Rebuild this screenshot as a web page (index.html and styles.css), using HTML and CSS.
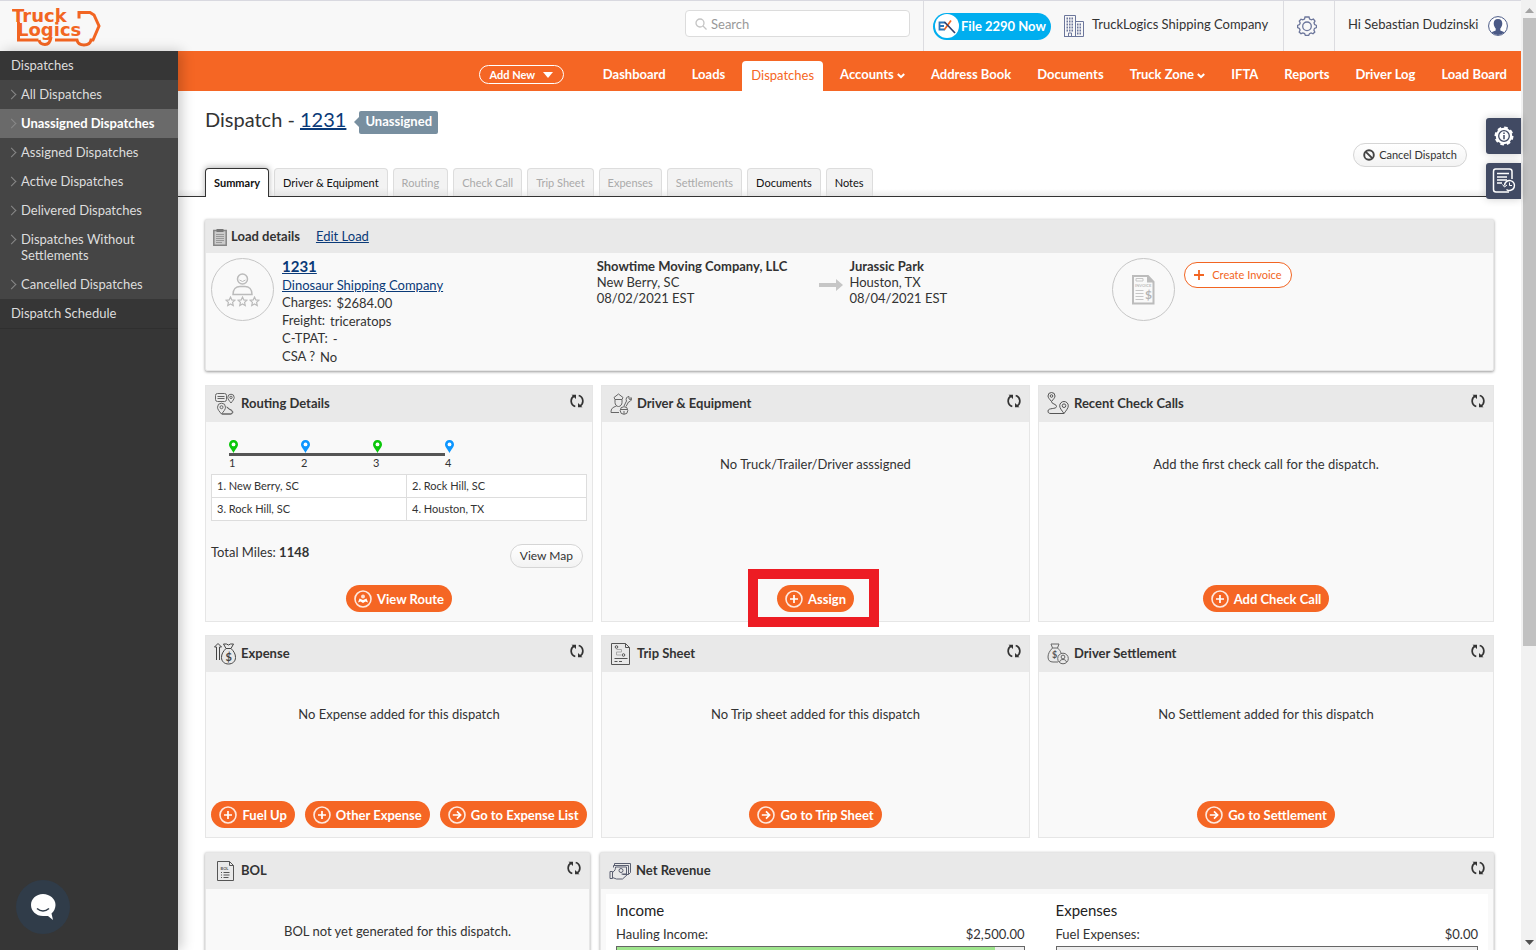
FILE: index.html
```html
<!DOCTYPE html>
<html lang="en">
<head>
    <meta charset="UTF-8">
    <meta name="viewport" content="width=device-width, initial-scale=1.0">
    <title>TruckLogics - Dispatch 1231</title>
    <link rel="stylesheet" href="styles.css">
</head>
<body>
<!-- shared icons -->
<svg width="0" height="0" class="sprite">
    <symbol id="refresh" viewBox="0 0 14 14">
        <path d="M4.200 2A5.700 5.700 0 0 0 5.300 12.500M9.800 12A5.700 5.700 0 0 0 8.700 1.500" fill="none" stroke="#333" stroke-width="1.700"/>
        <path d="M1.500.8H6V5zM12.500 13.200H8V9z" fill="#333"/>
    </symbol>
    <symbol id="plus" viewBox="0 0 18 18">
        <circle cx="9" cy="9" r="8" fill="none" stroke="#fff" stroke-opacity=".85" stroke-width="1.600"/>
        <path d="M9 5v8M5 9h8" stroke="#fff" stroke-width="1.700"/>
    </symbol>
    <symbol id="arrow" viewBox="0 0 18 18">
        <circle cx="9" cy="9" r="8" fill="none" stroke="#fff" stroke-opacity=".85" stroke-width="1.600"/>
        <path d="M4.800 9h7.400M9 5.400L12.600 9 9 12.600" fill="none" stroke="#fff" stroke-width="1.700"/>
    </symbol>
    <symbol id="pin" viewBox="0 0 9 13">
        <path d="M4.500 0A4.400 4.400 0 0 0 0 4.400C0 7.200 3 9.500 4.500 13 6 9.500 9 7.200 9 4.400A4.400 4.400 0 0 0 4.500 0z" fill="currentColor"/>
        <circle cx="4.500" cy="4.400" r="1.900" fill="#fff"/>
    </symbol>
    <symbol id="star" viewBox="0 0 10 10">
        <path d="M5 1l1.200 2.600 2.800.3-2.100 1.900.6 2.800L5 7.200 2.500 8.600l.6-2.800L1 3.900l2.800-.3z" fill="none" stroke="#bbb" stroke-width="1.100"/>
    </symbol>
</svg>

<div class="page">
    <header class="topbar">
        <a href="#" class="logo" aria-label="TruckLogics">
            <svg width="90" height="42" viewBox="0 0 90 42">
                <g fill="#f26522" font-family="DejaVu Sans, sans-serif" font-weight="bold" font-size="18">
                    <text x="0" y="17">Truck</text>
                    <text x="5" y="31">Logics</text>
                </g>
                <g fill="none" stroke="#f26522" stroke-width="3">
                    <path d="M6.500 17v18h20"/>
                    <path d="M27 35q1 4.500 6 4.500t6-7.500"/>
                    <path d="M43 35h22q1 5 7 5t7-5h2l6-14-5-11-4-2.500H67v6"/>
                </g>
            </svg>
        </a>
        <form class="search">
            <svg width="12" height="12" viewBox="0 0 12 12" fill="none" stroke="#c4c4c4" stroke-width="1.300"><circle cx="5" cy="5" r="4"/><path d="M8 8l3.500 3.500"/></svg>
            <input type="text" id="search" placeholder="Search" aria-label="Search">
        </form>
        <div class="top-cell company">
            <a href="#" class="file-btn">
                <svg width="24" height="24" viewBox="0 0 24 24">
                    <circle cx="12" cy="12" r="12" fill="#fff"/>
                    <path d="M10 8.500H4.500v7H10M4.500 12H9" fill="none" stroke="#2b76b9" stroke-width="1.800"/>
                    <path d="M16 6.500L9.500 15.500" stroke="#f26522" stroke-width="1.700"/>
                    <path d="M9.500 8L20 19" stroke="#2e4070" stroke-width="1.700"/>
                </svg>
                File 2290 Now
            </a>
            <svg width="20" height="22" viewBox="0 0 20 22" fill="none" stroke="#6c769b">
                <path d="M.5 21.500V.5h11v21M11.500 6.500h8v15H0"/>
                <path d="M2.500 3.500h7.500M2.500 6.500h7.500M2.500 9.500h7.500M2.500 12.500h7.500M2.500 15.500h7.500M13 9.500h5M13 12.500h5M13 15.500h5M13 18.500h5" stroke-width="2" stroke-dasharray="1.500 1"/>
                <path d="M4.500 21v-3h3v3"/>
            </svg>
            <span>TruckLogics Shipping Company</span>
        </div>
        <a href="#" class="top-cell settings" aria-label="Settings">
            <svg width="20" height="20" viewBox="0 0 20 20" fill="none" stroke="#6c769b" stroke-width="1.300">
                <path d="M8 1h4l.6 2 1.900.8L16.400 3 18 5l-1 1.900.6 1.600 1.900 1v2l-2 .9-.6 1.700.9 1.900-1.800 1.800-1.900-.8-1.600.7-.9 1.800H8.400l-.8-1.900-1.700-.7-1.900.8L2.200 16l.9-1.900-.7-1.700-1.800-.9v-2l1.900-.9.7-1.700L2.300 5 4 3.200l1.800.7L7.500 3z"/>
                <circle cx="10" cy="10.300" r="4.300"/>
            </svg>
        </a>
        <a href="#" class="top-cell user">
            <span>Hi Sebastian Dudzinski</span>
            <svg width="20" height="20" viewBox="0 0 20 20">
                <circle cx="10" cy="10" r="9.400" fill="#fff" stroke="#4b5a86"/>
                <path d="M10 3c3 0 4.300 2 4.300 4.500S13 11.500 12.300 12.500v2l4.200 1.800A9.400 9.400 0 0 1 3.500 16.300l4.200-1.800v-2C7 11.500 5.700 10 5.700 7.500S7 3 10 3z" fill="#4b5a86"/>
            </svg>
        </a>
    </header>

    <div class="below">
        <aside class="sidebar">
            <a href="#" class="side-title">Dispatches</a>
            <ul>
                <li><a href="#">All Dispatches</a></li>
                <li class="active"><a href="#">Unassigned Dispatches</a></li>
                <li><a href="#">Assigned Dispatches</a></li>
                <li><a href="#">Active Dispatches</a></li>
                <li><a href="#">Delivered Dispatches</a></li>
                <li><a href="#">Dispatches Without Settlements</a></li>
                <li><a href="#">Cancelled Dispatches</a></li>
            </ul>
            <a href="#" class="side-title last">Dispatch Schedule</a>
        </aside>

        <div class="main">
            <nav class="nav">
                <button type="button" class="add-new">Add New
                    <svg width="10" height="6" viewBox="0 0 10 6"><path d="M0 0h10L5 6z" fill="#fff"/></svg>
                </button>
                <a href="#">Dashboard</a>
                <a href="#">Loads</a>
                <a href="#" class="current">Dispatches</a>
                <a href="#">Accounts <svg width="8" height="6" viewBox="0 0 8 6"><path d="M.8 1L4 4.200 7.200 1" fill="none" stroke="#fff" stroke-width="2"/></svg></a>
                <a href="#">Address Book</a>
                <a href="#">Documents</a>
                <a href="#">Truck Zone <svg width="8" height="6" viewBox="0 0 8 6"><path d="M.8 1L4 4.200 7.200 1" fill="none" stroke="#fff" stroke-width="2"/></svg></a>
                <a href="#">IFTA</a>
                <a href="#">Reports</a>
                <a href="#">Driver Log</a>
                <a href="#">Load Board</a>
            </nav>

            <div class="title-row">
                <h1>Dispatch - <a href="#">1231</a></h1>
                <span class="badge">Unassigned</span>
                <button type="button" class="plain-btn cancel">
                    <svg width="12" height="12" viewBox="0 0 12 12" fill="none" stroke="#444" stroke-width="1.900"><circle cx="6" cy="6" r="4.800"/><path d="M2.600 2.600l6.800 6.800"/></svg>
                    Cancel Dispatch
                </button>
            </div>

            <div class="tabs">
                <a href="#" class="tab selected">Summary</a>
                <a href="#" class="tab">Driver &amp; Equipment</a>
                <a href="#" class="tab off">Routing</a>
                <a href="#" class="tab off">Check Call</a>
                <a href="#" class="tab off">Trip Sheet</a>
                <a href="#" class="tab off">Expenses</a>
                <a href="#" class="tab off">Settlements</a>
                <a href="#" class="tab">Documents</a>
                <a href="#" class="tab">Notes</a>
            </div>

            <main class="content">
                <section class="card raised load">
                    <div class="load-head">
                        <svg width="14" height="18" viewBox="0 0 14 18">
                            <path d="M.8 2.500h12.400v14.700H.8z" fill="#ccc" stroke="#858585" stroke-width="1.500"/>
                            <path d="M3.500 1h7v3h-7z" fill="#777"/>
                            <path d="M3 6.500h8M3 8.500h8M3 10.500h8M3 12.500h8M3 14.500h6" stroke="#999"/>
                        </svg>
                        <h2>Load details</h2>
                        <a href="#">Edit Load</a>
                    </div>
                    <div class="load-body">
                        <div class="customer">
                            <svg width="63" height="63" viewBox="0 0 63 63" fill="none" stroke="#bbb">
                                <circle cx="31.500" cy="31.500" r="31" stroke="#c6c6c6"/>
                                <g stroke-width="1.500">
                                    <circle cx="31.500" cy="21" r="5"/>
                                    <path d="M28.500 22q3 3 6 0" stroke-width="1"/>
                                    <path d="M22 36.500c0-5 3-8 7-8h5c4 0 7 3 7 8z"/>
                                </g>
                                <use href="#star" x="14" y="38" width="11" height="11"/>
                                <use href="#star" x="26" y="38" width="11" height="11"/>
                                <use href="#star" x="38" y="38" width="11" height="11"/>
                            </svg>
                            <div>
                                <a href="#" class="load-no">1231</a>
                                <a href="#" class="load-company">Dinosaur Shipping Company</a>
                                <dl>
                                    <div><dt>Charges:</dt><dd>$2684.00</dd></div>
                                    <div><dt>Freight:</dt><dd>triceratops</dd></div>
                                    <div><dt>C-TPAT:</dt><dd>-</dd></div>
                                    <div><dt>CSA ?</dt><dd>No</dd></div>
                                </dl>
                            </div>
                        </div>
                        <div class="stop">
                            <strong>Showtime Moving Company, LLC</strong>
                            <span>New Berry, SC</span>
                            <span>08/02/2021 EST</span>
                        </div>
                        <svg class="to" width="24" height="12" viewBox="0 0 24 12"><path d="M0 4h17V0l7 6-7 6V8H0z" fill="#c6c6c6"/></svg>
                        <div class="stop">
                            <strong>Jurassic Park</strong>
                            <span>Houston, TX</span>
                            <span>08/04/2021 EST</span>
                        </div>
                        <div class="invoice">
                            <svg width="63" height="63" viewBox="0 0 63 63" fill="none">
                                <circle cx="31.500" cy="31.500" r="31" stroke="#c6c6c6"/>
                                <path d="M21 18h15l5.500 6v21.500H21z" fill="#f9f9f9" stroke="#bcbcbc" stroke-width="2"/>
                                <path d="M35 17v7.500h7z" fill="#bcbcbc"/>
                                <path d="M24 20.500h7v2.500h-7z" stroke="#c6c6c6"/>
                                <path d="M23.500 32.500h8M23.500 35.500h8M23.500 38.500h8M23.500 41.500h8" stroke="#c6c6c6"/>
                                <text x="23" y="29" font-size="4" font-weight="bold" fill="#bcbcbc">INVOICE</text>
                                <text x="33" y="41" font-size="12" font-weight="bold" fill="#b4b4b4">$</text>
                            </svg>
                            <button type="button" class="outline-btn">
                                <svg width="10" height="10" viewBox="0 0 10 10"><path d="M5 0v10M0 5h10" stroke="#f26522" stroke-width="1.800"/></svg>
                                Create Invoice
                            </button>
                        </div>
                    </div>
                </section>

                <div class="grid-three">
                    <section class="card">
                        <div class="card-head">
                            <svg width="22" height="24" viewBox="0 0 22 24" fill="none" stroke="#666">
                                <rect x="1.500" y="1.500" width="11" height="8" rx="2"/><path d="M3.500 4.500h7M3.500 6.500h7"/>
                                <path d="M17 11c-1.800-2.300-3.200-3.800-3.200-5.600a3.200 3.200 0 0 1 6.400 0c0 1.800-1.400 3.300-3.200 5.600z"/><circle cx="17" cy="5.400" r="1.200"/>
                                <path d="M7.500 22c-2.300-2.800-4-4.600-4-6.800a4 4 0 0 1 8 0c0 2.200-1.700 4-4 6.800zh9c3-.5 2-4-1-4.500l-3-2.500"/><circle cx="7.500" cy="15.200" r="1.500"/>
                                <path d="M8 22h9c3-.5 2-4-1-4.500l-3-2.500"/>
                            </svg>
                            <h2>Routing Details</h2>
                            <button type="button" class="refresh" aria-label="Refresh"><svg width="14" height="14"><use href="#refresh"/></svg></button>
                        </div>
                        <div class="card-body routing">
                            <ol class="route">
                                <li class="pickup"><svg width="9" height="13"><use href="#pin"/></svg><span>1</span></li>
                                <li class="drop"><svg width="9" height="13"><use href="#pin"/></svg><span>2</span></li>
                                <li class="pickup"><svg width="9" height="13"><use href="#pin"/></svg><span>3</span></li>
                                <li class="drop"><svg width="9" height="13"><use href="#pin"/></svg><span>4</span></li>
                            </ol>
                            <table class="stops">
                                <tr><td>1. New Berry, SC</td><td>2. Rock Hill, SC</td></tr>
                                <tr><td>3. Rock Hill, SC</td><td>4. Houston, TX</td></tr>
                            </table>
                            <div class="miles">
                                <span>Total Miles: <b>1148</b></span>
                                <button type="button" class="plain-btn">View Map</button>
                            </div>
                            <div class="actions">
                                <button type="button" class="btn">
                                    <svg width="18" height="18" viewBox="0 0 18 18"><circle cx="9" cy="9" r="8" fill="none" stroke="#fff" stroke-opacity=".85" stroke-width="1.600"/><path d="M4 12.500l1.500-4L9 10l3.500-1.500 1.500 4-2.500-1L9 13l-2.500-1.500z" fill="#fff"/><circle cx="9" cy="6.500" r="2" fill="#fff" fill-opacity=".8"/></svg>
                                    View Route
                                </button>
                            </div>
                        </div>
                    </section>

                    <section class="card">
                        <div class="card-head">
                            <svg width="22" height="24" viewBox="0 0 22 24" fill="none" stroke="#666">
                                <path d="M4 5.500l4.500-3.500L13 5.500l-1 2H5zM5 7.500v3c0 2 1.500 4 3.500 4s3.500-2 3.500-4v-3M1 20.500c0-4 1.500-5 5.500-6.500M1 20.500h8"/>
                                <path d="M14 14l2.500-5c-1-2 0-4.500 2.500-4.500v2.500l2 1V5.500c1 2 0 4-2.500 4.500L16 14.500"/>
                                <circle cx="14" cy="18.500" r="3.800"/><path d="M10.500 17.500h7M14 19v3"/>
                            </svg>
                            <h2>Driver &amp; Equipment</h2>
                            <button type="button" class="refresh" aria-label="Refresh"><svg width="14" height="14"><use href="#refresh"/></svg></button>
                        </div>
                        <div class="card-body">
                            <p>No Truck/Trailer/Driver asssigned</p>
                            <div class="actions">
                                <span class="marked"><button type="button" class="btn"><svg width="18" height="18"><use href="#plus"/></svg>Assign</button></span>
                            </div>
                        </div>
                    </section>

                    <section class="card">
                        <div class="card-head">
                            <svg width="22" height="24" viewBox="0 0 22 24" fill="none" stroke="#555">
                                <path d="M4.500 9.500C2.500 7 1 5.700 1 4a3.500 3.500 0 0 1 7 0c0 1.700-1.500 3-3.500 5.500z"/><circle cx="4.500" cy="4" r="1.300"/>
                                <path d="M17 21.500c-2.500-3.500-4.300-5.400-4.300-7.700a4.300 4.300 0 0 1 8.600 0c0 2.300-1.800 4.200-4.300 7.700z"/><circle cx="17" cy="13.700" r="1.800"/>
                                <path d="M4.500 9.500c0 3 5 2 5 5s-8.500 1-8.500 4.500c0 2 1 2.500 3 2.500h13"/>
                            </svg>
                            <h2>Recent Check Calls</h2>
                            <button type="button" class="refresh" aria-label="Refresh"><svg width="14" height="14"><use href="#refresh"/></svg></button>
                        </div>
                        <div class="card-body">
                            <p>Add the first check call for the dispatch.</p>
                            <div class="actions">
                                <button type="button" class="btn"><svg width="18" height="18"><use href="#plus"/></svg>Add Check Call</button>
                            </div>
                        </div>
                    </section>

                    <section class="card short">
                        <div class="card-head">
                            <svg width="22" height="24" viewBox="0 0 22 24" fill="none" stroke="#444">
                                <path d="M2.500 18V5H.5L4 1.500 7.500 5h-2v13"/>
                                <path d="M12 6.500L9.500 2h3l2 1 2-1h3L17 6.500zM12 6.500C9 9.500 7.500 12 7.500 15.500c0 4 3 6.500 7 6.500s7-2.500 7-6.500c0-3.500-1.500-6-4.500-9"/>
                                <text x="11.500" y="19" font-size="11" font-weight="bold" fill="#444" stroke="none">$</text>
                            </svg>
                            <h2>Expense</h2>
                            <button type="button" class="refresh" aria-label="Refresh"><svg width="14" height="14"><use href="#refresh"/></svg></button>
                        </div>
                        <div class="card-body">
                            <p>No Expense added for this dispatch</p>
                            <div class="actions">
                                <button type="button" class="btn"><svg width="18" height="18"><use href="#plus"/></svg>Fuel Up</button>
                                <button type="button" class="btn"><svg width="18" height="18"><use href="#plus"/></svg>Other Expense</button>
                                <button type="button" class="btn"><svg width="18" height="18"><use href="#arrow"/></svg>Go to Expense List</button>
                            </div>
                        </div>
                    </section>

                    <section class="card short">
                        <div class="card-head">
                            <svg width="22" height="24" viewBox="0 0 22 24" fill="none" stroke="#555">
                                <path d="M1.500 1.500h14l4 4v17h-18zM15.500 1.500v4h4"/>
                                <circle cx="6.500" cy="5" r="1.300"/><circle cx="13.500" cy="13" r="1.300"/>
                                <path d="M6.500 7.500h5v2.500h-5v3h4.500" stroke="#aaa"/>
                                <path d="M4.500 16.500h13M4.500 19.500h3M9 19.500h3"/>
                            </svg>
                            <h2>Trip Sheet</h2>
                            <button type="button" class="refresh" aria-label="Refresh"><svg width="14" height="14"><use href="#refresh"/></svg></button>
                        </div>
                        <div class="card-body">
                            <p>No Trip sheet added for this dispatch</p>
                            <div class="actions">
                                <button type="button" class="btn"><svg width="18" height="18"><use href="#arrow"/></svg>Go to Trip Sheet</button>
                            </div>
                        </div>
                    </section>

                    <section class="card short">
                        <div class="card-head">
                            <svg width="22" height="24" viewBox="0 0 22 24" fill="none" stroke="#666">
                                <path d="M5.500 6L4 2h8l-1.500 4zM5.500 6C2.500 9 1 12 1 15c0 3.500 2 5 5 5h5M10.500 6c2 2 3 3 3.500 5"/>
                                <circle cx="16" cy="16.500" r="5.300"/><circle cx="16" cy="15" r="1.900"/><path d="M12.500 20c.5-2 2-2.500 3.500-2.500s3 .5 3.500 2.500"/>
                                <text x="5" y="16" font-size="9" font-weight="bold" fill="#555" stroke="none">$</text>
                            </svg>
                            <h2>Driver Settlement</h2>
                            <button type="button" class="refresh" aria-label="Refresh"><svg width="14" height="14"><use href="#refresh"/></svg></button>
                        </div>
                        <div class="card-body">
                            <p>No Settlement added for this dispatch</p>
                            <div class="actions">
                                <button type="button" class="btn"><svg width="18" height="18"><use href="#arrow"/></svg>Go to Settlement</button>
                            </div>
                        </div>
                    </section>
                </div>

                <div class="grid-two">
                    <section class="card raised">
                        <div class="card-head">
                            <svg width="22" height="24" viewBox="0 0 22 24" fill="none" stroke="#555">
                                <path d="M3.500 2.500h12l4 4v15h-16zM15.500 2.500v4h4"/>
                                <path d="M7 13.500h1M7 16h1M7 18.500h1M9.500 13.500h6M9.500 16h6M9.500 18.500h5"/>
                                <text x="6.500" y="10.500" font-size="4" font-weight="bold" fill="#555" stroke="none">BOL</text>
                            </svg>
                            <h2>BOL</h2>
                            <button type="button" class="refresh" aria-label="Refresh"><svg width="14" height="14"><use href="#refresh"/></svg></button>
                        </div>
                        <div class="card-body">
                            <p>BOL not yet generated for this dispatch.</p>
                        </div>
                    </section>

                    <section class="card raised">
                        <div class="card-head">
                            <svg width="22" height="24" viewBox="0 0 22 24" fill="none" stroke="#5a5f70">
                                <path d="M5.500 6.500v-2h16v9l-2 2M4.500 8.500v-2h15v9h-6"/>
                                <path d="M1 12.500h2.500v7H1zM3.500 13.500c3-2 3-4 3-5.500h11v7h-5M3.500 18.500l4 1.500h6l5-4.500"/><circle cx="12" cy="11.500" r="2"/>
                            </svg>
                            <h2>Net Revenue</h2>
                            <button type="button" class="refresh" aria-label="Refresh"><svg width="14" height="14"><use href="#refresh"/></svg></button>
                        </div>
                        <div class="revenue">
                            <div>
                                <h3>Income</h3>
                                <div class="amount"><span>Hauling Income:</span><span>$2,500.00</span></div>
                                <div class="bar"><div class="fill" style="width: 93%"></div></div>
                            </div>
                            <div>
                                <h3>Expenses</h3>
                                <div class="amount"><span>Fuel Expenses:</span><span>$0.00</span></div>
                                <div class="bar"></div>
                            </div>
                        </div>
                    </section>
                </div>
            </main>
        </div>
    </div>
</div>

<div class="scrollbar">
    <svg width="9" height="5" viewBox="0 0 9 5"><path d="M4.500 0L9 5H0z" fill="#a3a3a3"/></svg>
    <div class="thumb"></div>
    <svg width="9" height="5" viewBox="0 0 9 5"><path d="M0 0h9L4.500 5z" fill="#505050"/></svg>
</div>

<div class="side-tools">
    <button type="button" aria-label="Info">
        <svg width="20" height="20" viewBox="0 0 20 20">
            <circle cx="10" cy="10" r="8.300" fill="#fff" stroke="#fff" stroke-width="2.400" stroke-dasharray="3.600 2.900"/>
            <circle cx="10" cy="10" r="5.300" fill="none" stroke="#414a63" stroke-width="1.300"/>
            <path d="M10 6.500v1.500M10 9v4.200" stroke="#414a63" stroke-width="1.500"/>
        </svg>
    </button>
    <button type="button" aria-label="History">
        <svg width="24" height="26" viewBox="0 0 24 26" fill="none" stroke="#fff">
            <path d="M20 11V3.500Q20 1 17.500 1h-14Q1.500 1 1.500 3.500v18q0 2.500 2.500 2.500h13" stroke-width="1.500"/>
            <path d="M5 5.500h12M5 9h10M5 12h10M5 15h5" stroke-width="1.500"/>
            <path d="M12.500 17.500a5 5 0 1 1 2 4" stroke-width="1.500"/><path d="M10.500 16.500l2 2.500 2.500-2M17.500 14.500v3h2.500"/>
        </svg>
    </button>
</div>

<button type="button" class="chat" aria-label="Chat">
    <svg width="27" height="28" viewBox="0 0 27 28">
        <path d="M13 1C6 1 1 6 1 12s5 11 12 11h5l5 4-1.500-6.500C24 18.500 25.500 15 25.500 12 25.500 6 20 1 13 1z" fill="#fff"/>
        <path d="M7 15.500q6 5 12 0" fill="none" stroke="#303c49" stroke-width="1.600"/>
    </svg>
</button>
</body>
</html>
```
FILE: styles.css
```css
* {
    box-sizing: border-box;
}
body {
    display: flex;
    height: 100vh;
    margin: 0;
    overflow: hidden;
    background: #fff;
    color: #333;
    font-family: Lato, "Open Sans", sans-serif;
    font-size: 13px;
    line-height: 16px;
}
h1, h2, h3, p, ul, ol, dl, dd {
    margin: 0;
    padding: 0;
}
ul, ol {
    list-style: none;
}
a {
    color: inherit;
    text-decoration: none;
}
button, input {
    font: inherit;
    color: inherit;
}
button {
    cursor: pointer;
}
svg {
    flex: none;
}
.sprite {
    position: absolute;
}
.page {
    display: flex;
    flex: 1;
    flex-direction: column;
    min-width: 0;
}

/* top bar */
.topbar {
    display: flex;
    height: 51px;
    flex: none;
    border-top: 1px solid #d9d9e0;
    background: #f8f8f8;
}
.logo {
    margin-right: auto;
    padding: 4px 0 0 12px;
}
.search {
    display: flex;
    align-items: center;
    gap: 4px;
    width: 225px;
    height: 27px;
    margin: 9px 13px 0 0;
    padding: 0 9px;
    border: 1px solid #dcdcdc;
    border-radius: 4px;
    background: #fff;
}
.search input {
    width: 100%;
    padding: 0;
    border: 0;
    outline: 0;
    background: none;
}
.search input::placeholder {
    color: #999;
}
.top-cell {
    display: flex;
    align-items: center;
    border-left: 1px solid #dcdce0;
}
.company {
    width: 360px;
    padding-left: 9px;
    gap: 8px;
}
.company span, .user span {
    padding-bottom: 4px;
}
.file-btn {
    display: flex;
    align-items: center;
    gap: 2px;
    width: 118px;
    height: 27px;
    margin-right: 5px;
    padding-left: 2px;
    border-radius: 14px;
    background: #00aeef;
    color: #fff;
    font-weight: bold;
    white-space: nowrap;
}
.settings {
    justify-content: center;
    width: 51px;
    padding-right: 4px;
}
.user {
    justify-content: space-between;
    width: 187px;
    padding: 0 13px;
}

/* left menu */
.below {
    display: flex;
    flex: 1;
    min-height: 0;
}
.sidebar {
    z-index: 1;
    width: 178px;
    flex: none;
    background: #363636;
    box-shadow: 4px 0 12px rgba(0, 0, 0, 0.2);
    color: #ddd;
}
.side-title {
    display: block;
    padding: 6px 11px 7px;
}
.side-title.last {
    border-bottom: 1px solid #2f2f2f;
}
.sidebar ul {
    background: #454545;
}
.sidebar li a {
    display: flex;
    gap: 6px;
    padding: 6px 30px 7px 10px;
}
.sidebar li a::before {
    content: "";
    flex: none;
    width: 6px;
    height: 6px;
    margin: 5px 0 0 -2px;
    border: solid #888;
    border-width: 1px 1px 0 0;
    transform: rotate(45deg);
}
.sidebar .active a {
    padding-right: 0;
    background: #6a6a6a;
    color: #fff;
    font-weight: bold;
}

/* orange menu */
.main {
    display: flex;
    flex: 1;
    flex-direction: column;
    min-width: 0;
}
.nav {
    display: flex;
    justify-content: flex-end;
    gap: 8px;
    height: 40px;
    flex: none;
    padding: 10px 5px 0 0;
    background: #f56624;
    color: #fff;
    font-weight: bold;
    white-space: nowrap;
}
.nav a {
    padding: 5px 9px;
}
.nav .current {
    padding-top: 6px;
    border-radius: 4px 4px 0 0;
    background: #fff;
    color: #f56624;
    font-weight: normal;
}
.add-new {
    display: flex;
    align-items: center;
    justify-content: center;
    gap: 8px;
    width: 85px;
    height: 19px;
    margin: 4px 22px 0 0;
    padding: 0;
    border: 1px solid #fff;
    border-radius: 10px;
    background: none;
    font-size: 11px;
}

/* title and tabs */
.title-row {
    display: flex;
    align-items: flex-start;
    height: 77px;
    flex: none;
    padding: 16px 54px 0 27px;
}
h1 {
    font-size: 20px;
    font-weight: normal;
    line-height: 24px;
}
h1 a, .load-head a, .load-no, .load-company {
    color: #0a3a78;
    text-decoration: underline;
}
.badge {
    position: relative;
    margin: 4px 0 0 13px;
    padding: 2px 6px 5px;
    border-radius: 2px;
    background: #788fa0;
    color: #fff;
    font-weight: bold;
}
.badge::before {
    content: "";
    position: absolute;
    top: 6px;
    left: -5px;
    border: solid transparent;
    border-width: 5px 5px 5px 0;
    border-right-color: #788fa0;
}
.plain-btn {
    display: flex;
    align-items: center;
    gap: 4px;
    height: 24px;
    padding: 0 9px;
    border: 1px solid #d5d5d5;
    border-radius: 12px;
    background: linear-gradient(#fff, #f3f3f3);
    font-size: 12px;
}
.cancel {
    margin: 36px 0 0 auto;
    font-size: 11px;
}
.tabs {
    display: flex;
    gap: 5px;
    height: 29px;
    flex: none;
    padding-left: 27px;
    border-bottom: 1px solid #333;
    background: linear-gradient(#fff 75%, #ececec);
    font-size: 11px;
}
.tab {
    padding: 6px 8px;
    border: 1px solid #ddd;
    border-bottom: 0;
    border-radius: 4px 4px 0 0;
    background: linear-gradient(#f3f3f3 70%, #e4e4e4);
    color: #111;
    white-space: nowrap;
}
.tab.off {
    color: #aaa;
}
.tab.selected {
    margin-bottom: -1px;
    border-color: #333;
    background: #fff;
    box-shadow: 0 -1px 6px rgba(0, 0, 0, 0.3);
    clip-path: inset(-8px -8px 0 -8px);
    font-weight: bold;
}

/* cards */
.content {
    display: flex;
    flex-direction: column;
    gap: 14px;
    padding: 22px 27px 0;
}
.card {
    display: flex;
    flex-direction: column;
    min-width: 0;
    border: 1px solid #e6e6e6;
    background: #f9f9f9;
}
.card.raised {
    box-shadow: 0 1px 3px rgba(0, 0, 0, 0.4);
    border-radius: 2px;
}
h2 {
    padding-bottom: 2px;
    font-size: 13px;
    font-weight: bold;
    line-height: 18px;
}
.load-head {
    display: flex;
    align-items: center;
    height: 33px;
    gap: 4px;
    padding-left: 7px;
    background: #e9e9e9;
}
.load-head a {
    margin-left: 12px;
    padding-bottom: 2px;
}
.load-body {
    display: grid;
    grid-template-columns: 386fr 222fr 31fr 263fr 381fr;
    height: 117px;
    padding: 5px 0 0 5px;
}
.customer, .invoice {
    display: flex;
    gap: 9px;
    align-items: flex-start;
}
.customer {
    gap: 8px;
}
.load-no {
    display: block;
    font-size: 15px;
    font-weight: bold;
    line-height: 17px;
}
.load-company {
    display: block;
    line-height: 20px;
}
dl > div {
    display: flex;
    gap: 5px;
    line-height: 18px;
}
dl {
    margin-top: -2px;
}
dd {
    padding-top: 1px;
    height: 18px;
}
.stop {
    display: flex;
    flex-direction: column;
}
.to {
    margin-top: 21px;
}
.outline-btn {
    display: flex;
    align-items: center;
    gap: 8px;
    height: 26px;
    margin-top: 4px;
    padding: 0 9px;
    border: 1px solid #f26522;
    border-radius: 13px;
    background: #fff;
    color: #f26522;
    font-size: 11px;
}
.grid-three {
    display: grid;
    grid-template-columns: 388fr 429fr 456fr;
    gap: 13px 8px;
}
.grid-two {
    display: grid;
    grid-template-columns: 385fr 894fr;
    gap: 10px;
}
.card-head {
    display: flex;
    align-items: center;
    gap: 5px;
    height: 36px;
    flex: none;
    padding: 0 8px;
    background: #e9e9e9;
}
.refresh {
    display: flex;
    margin: 0 0 6px auto;
    padding: 0;
    border: 0;
    background: none;
}
.card-body {
    display: flex;
    flex: 1;
    flex-direction: column;
    min-height: 199px;
    padding: 34px 5px 9px;
}
.short .card-body {
    min-height: 165px;
}
.card-body p {
    text-align: center;
}
.actions {
    display: flex;
    justify-content: center;
    gap: 10px;
    margin-top: auto;
}
.btn {
    display: flex;
    align-items: center;
    gap: 5px;
    height: 27px;
    padding: 0 8px;
    border: 0;
    border-radius: 14px;
    background: #f56624;
    color: #fff;
    font-weight: bold;
    white-space: nowrap;
}
.marked {
    position: relative;
}
.marked::after {
    content: "";
    position: absolute;
    inset: -16px -25px -15px -29px;
    border: 10px solid #ed1c24;
    pointer-events: none;
}

/* routing card */
.card-body.routing {
    padding-top: 18px;
}
.route {
    display: flex;
    width: 216px;
    margin: 0 0 5px 18px;
    font-size: 11px;
    line-height: 13px;
}
.route li {
    display: flex;
    flex: none;
    flex-direction: column;
    width: 72px;
}
.route span {
    border-top: 3px solid #555;
    color: #333;
}
.route li:last-child span {
    border-color: transparent;
}
.pickup {
    color: #0bc70b;
}
.drop {
    color: #0d96ff;
}
.stops {
    border-collapse: collapse;
    background: #fff;
    font-size: 11px;
}
.stops td {
    height: 23px;
    padding: 0 5px;
    border: 1px solid #ddd;
}
.stops td:first-child {
    width: 52%;
}
.miles {
    display: flex;
    align-items: flex-start;
    justify-content: space-between;
    padding: 23px 4px 0 0;
}

/* net revenue */
.revenue {
    display: grid;
    grid-template-columns: 409fr 423fr;
    gap: 31px;
    margin: 5px 5px 0;
    padding: 7px 10px;
    background: #fff;
}
h3 {
    font-size: 15px;
    font-weight: normal;
    line-height: 18px;
    color: #222;
}
.amount {
    display: flex;
    justify-content: space-between;
    padding: 7px 0 4px;
}
.bar {
    height: 14px;
    border: 1px solid #666;
    background: #eee;
}
.fill {
    height: 100%;
    background: #9fe58d;
}

/* scroll bar */
.scrollbar {
    display: flex;
    flex-direction: column;
    align-items: center;
    width: 15px;
    padding: 8px 0 5px 2px;
    background: #f1f1f1;
}
.thumb {
    width: 100%;
    height: 67%;
    margin: 5px 0 auto;
    background: #c1c1c1;
}

/* floating buttons */
.side-tools {
    position: fixed;
    top: 118px;
    right: 15px;
    display: flex;
    flex-direction: column;
    gap: 9px;
}
.side-tools button {
    display: flex;
    align-items: center;
    justify-content: center;
    width: 35px;
    height: 36px;
    padding: 0;
    border: 0;
    border-radius: 3px 0 0 3px;
    background: #414a63;
    box-shadow: 0 0 8px rgba(0, 0, 0, 0.2);
}
.chat {
    position: fixed;
    z-index: 2;
    bottom: 16px;
    left: 16px;
    display: flex;
    align-items: center;
    justify-content: center;
    width: 54px;
    height: 54px;
    border: 0;
    border-radius: 50%;
    background: #303c49;
}
```
